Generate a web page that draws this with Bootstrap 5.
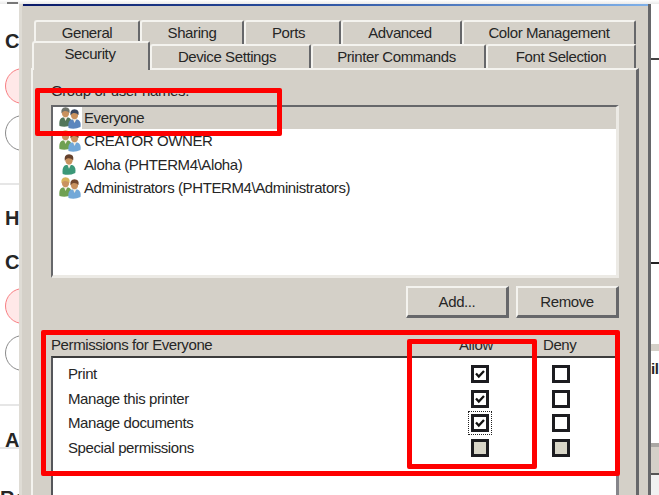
<!DOCTYPE html>
<html lang="en">
<head>
<meta charset="utf-8">
<meta name="viewport" content="width=device-width, initial-scale=1">
<title>Printer Properties</title>
<link href="https://cdn.jsdelivr.net/npm/bootstrap@5.3.0/dist/css/bootstrap.min.css" rel="stylesheet">
<style>
:root{--face:#d4d0c8;--lit:#f4f3ef;--dk:#66676a}
body{width:659px;height:495px;overflow:hidden;background:#fff;color:#262626;font:15px/18px "Liberation Sans",Arial,sans-serif;letter-spacing:-.4px}
.topstrip{height:4px;background:linear-gradient(#fff,#e9e9e9)}
.topstrip i{display:block;width:11px;height:2px;margin-left:7px;background:#777}
.behind-l{width:19px;height:491px}
.cap-l{font-weight:700;font-size:20px;line-height:20px;height:20px;padding-left:5px;white-space:nowrap;letter-spacing:0;flex:none}
.pill-r,.pill-g{width:36px;height:36px;margin-left:5px;border-radius:50%;border:1.5px solid #f87f83;background:#ffe8e8;flex:none}
.pill-g{border-color:#8b8b8b;background:#fff;margin-top:11px}
.rule{height:2px;background:#e6e6e6;flex:none}
.behind-r{width:8px;height:491px;font-size:15px}
.win{width:632px;height:491px;background:var(--face);border-left:3px solid #dfdcd5;border-right:3px solid var(--dk);flex:none}
.titleline{height:2px;margin-left:1px;background:linear-gradient(90deg,#0a1a68,#2a50a0 45%,#7fb0e8)}
.tabrows{padding:14px 13px 0 10px}
.ptab{height:24px;border-top:2px solid var(--lit);border-left:2px solid var(--lit);border-right:2px solid var(--dk);border-radius:3px 2px 0 0;text-align:center;line-height:22px;background:var(--face);flex:none}
.row-a{padding-left:2px;height:24px}
.row-b{height:24px}
.ptab-on{height:29px;margin-top:-3px;z-index:1}
.sheet{height:430px;margin:0 9px 0 9px;border:2px solid var(--lit);border-right:3px solid var(--dk);border-bottom:0;padding:12px 17px 0 18px}
.ulist{height:173px;margin-top:5px;border:2px solid var(--dk);border-right:3px solid #eceae5;border-bottom:3px solid #eceae5;background:#fff;padding-left:5px}
.urow{height:23.3px}
.urow svg{width:24px;height:22px;flex:none}
.urow span{height:22px;line-height:22px;flex:1;padding-left:2px}
.urow .sel{background:var(--face)}
.pbtn{width:103px;height:32px;border-radius:0;border:2px solid var(--lit);border-right:3px solid var(--dk);border-bottom:3px solid var(--dk);background:var(--face);font:inherit;letter-spacing:inherit;color:inherit;padding:0}
.phead{height:21px;margin-top:17px;line-height:20px}
.pbox{height:150px;border:2px solid #3c3c3c;border-left:2px solid #55565a;border-right:3px solid #85858a;border-bottom:0;background:#fff;padding:4px 0 0 15px}
.prow{height:24.5px}
.prow .nm{width:403px}
.ck{width:18px;height:18px;border:3px solid #1c1c20;background:#fff;display:block;flex:none}
.ck svg{display:block;width:12px;height:12px}
.ck+.ck{margin-left:63px}
.ck.off{background:#d8d6c8}
.ck.foc{outline:1px dotted #222;outline-offset:2px}
.redbox{position:absolute;border:5px solid #fe0000;border-radius:2px;z-index:5}
.rb1{left:35px;top:88px;width:247px;height:48px}
.rb2{left:41px;top:330px;width:579px;height:146px}
.rb3{left:407px;top:339px;width:130px;height:130px}
</style>
<script src="https://cdn.jsdelivr.net/npm/bootstrap@5.3.0/dist/js/bootstrap.bundle.min.js"></script>
</head>
<body class="position-relative">
<svg width="0" height="0" class="position-absolute">
  <defs>
    <symbol id="person" viewBox="0 0 14 20">
      <path d="M1 19Q0 12 4 10.500L10 10.500Q14 12 13 18Q7 21 1 19Z"/>
      <path d="M5 9L7 14L9.500 9Z" fill="#f5efe2"/>
      <ellipse cx="7" cy="5.800" rx="3.600" ry="4.400" fill="#c9925f"/>
      <path d="M3 6.500Q2 .5 7 .3Q12 .5 11 6Q9 3.600 6 4Q4.200 4.300 3 6.500Z" fill="var(--hair)"/>
    </symbol>
  </defs>
</svg>
<div class="topstrip pt-0 d-flex align-items-end"><i></i></div>
<div class="d-flex">
  <div class="behind-l d-flex flex-column overflow-hidden">
    <div class="cap-l" style="margin-top:27px">C</div>
    <div class="pill-r" style="margin-top:17px"></div>
    <div class="pill-g"></div>
    <div class="rule" style="margin-top:32px"></div>
    <div class="cap-l" style="margin-top:23px">H</div>
    <div class="cap-l" style="margin-top:24px">C</div>
    <div class="pill-r" style="margin-top:16px"></div>
    <div class="pill-g"></div>
    <div class="rule" style="margin-top:33px"></div>
    <div class="cap-l" style="margin-top:24px">A</div>
    <div class="rule" style="margin-top:-3px"></div>
    <div class="cap-l ps-0" style="margin-top:39px">Ro</div>
  </div>
  <div class="win">
    <div class="titleline"></div>
    <div class="tabrows">
      <div class="row-a d-flex">
        <div class="ptab" style="width:106px">General</div>
        <div class="ptab" style="width:104px">Sharing</div>
        <div class="ptab pe-2" style="width:97px">Ports</div>
        <div class="ptab" style="width:121px;padding-right:3px">Advanced</div>
        <div class="ptab" style="width:174px">Color Management</div>
      </div>
      <div class="row-b d-flex">
        <div class="ptab ptab-on" style="width:118px;padding-right:2px">Security</div>
        <div class="ptab" style="width:161px;padding-right:7px">Device Settings</div>
        <div class="ptab" style="width:175px;padding-right:4px">Printer Commands</div>
        <div class="ptab" style="width:150px">Font Selection</div>
      </div>
    </div>
    <div class="sheet">
      <div>Group or user names:</div>
      <div class="ulist">
        <div class="urow d-flex">
          <svg viewBox="0 0 24 22"><use href="#person" x="0" y="0" width="15" height="20" fill="#52765a" style="--hair:#70736a"/><use href="#person" x="9" y="2" width="15" height="20" fill="#5b86bd" style="--hair:#39465e"/></svg>
          <span class="sel">Everyone</span>
        </div>
        <div class="urow d-flex">
          <svg viewBox="0 0 24 22"><use href="#person" x="0" y="0" width="15" height="20" fill="#6fa052" style="--hair:#d8b35c"/><use href="#person" x="9" y="2" width="15" height="20" fill="#72a8d8" style="--hair:#73482d"/></svg>
          <span>CREATOR OWNER</span>
        </div>
        <div class="urow d-flex">
          <svg viewBox="0 0 24 22"><use href="#person" x="3" y="0" width="16" height="21" fill="#3c9878" style="--hair:#65412c"/></svg>
          <span>Aloha (PHTERM4\Aloha)</span>
        </div>
        <div class="urow d-flex">
          <svg viewBox="0 0 24 22"><use href="#person" x="0" y="0" width="15" height="20" fill="#6fa052" style="--hair:#d8b35c"/><use href="#person" x="9" y="2" width="15" height="20" fill="#72a8d8" style="--hair:#73482d"/></svg>
          <span>Administrators (PHTERM4\Administrators)</span>
        </div>
      </div>
      <div class="d-flex justify-content-end" style="gap:7px;margin-top:8px">
        <button type="button" class="btn pbtn">Add...</button>
        <button type="button" class="btn pbtn">Remove</button>
      </div>
      <div class="phead d-flex"><span style="width:408px">Permissions for Everyone</span><span style="width:84px">Allow</span><span>Deny</span></div>
      <div class="pbox">
        <div class="prow d-flex align-items-center"><span class="nm">Print</span><i class="ck"><svg viewBox="0 0 12 12"><path d="M2 5.500L4.800 8.500L10 3" fill="none" stroke="#111" stroke-width="2.300"/></svg></i><i class="ck"></i></div>
        <div class="prow d-flex align-items-center"><span class="nm">Manage this printer</span><i class="ck"><svg viewBox="0 0 12 12"><path d="M2 5.500L4.800 8.500L10 3" fill="none" stroke="#111" stroke-width="2.300"/></svg></i><i class="ck"></i></div>
        <div class="prow d-flex align-items-center"><span class="nm">Manage documents</span><i class="ck foc"><svg viewBox="0 0 12 12"><path d="M2 5.500L4.800 8.500L10 3" fill="none" stroke="#111" stroke-width="2.300"/></svg></i><i class="ck"></i></div>
        <div class="prow d-flex align-items-center"><span class="nm">Special permissions</span><i class="ck off"></i><i class="ck off"></i></div>
      </div>
    </div>
  </div>
  <div class="behind-r overflow-hidden">
    <div style="height:54px"></div>
    <div style="height:2px;background:#444"></div>
    <div style="height:202px"></div>
    <div style="height:2px;background:#222"></div>
    <div style="height:80px"></div>
    <div style="height:7px;background:#d4d0c8"></div>
    <div class="fw-bold" style="height:92px;padding-top:9px">il</div>
    <div style="height:4px;background:#aaa8a4"></div>
    <div style="height:26px;background:#d4d0c8"></div>
    <div style="height:2px;background:#555"></div>
    <div style="height:20px;background:#f1f1f1"></div>
  </div>
</div>
<div class="redbox rb1"></div>
<div class="redbox rb2"></div>
<div class="redbox rb3"></div>
</body>
</html>
